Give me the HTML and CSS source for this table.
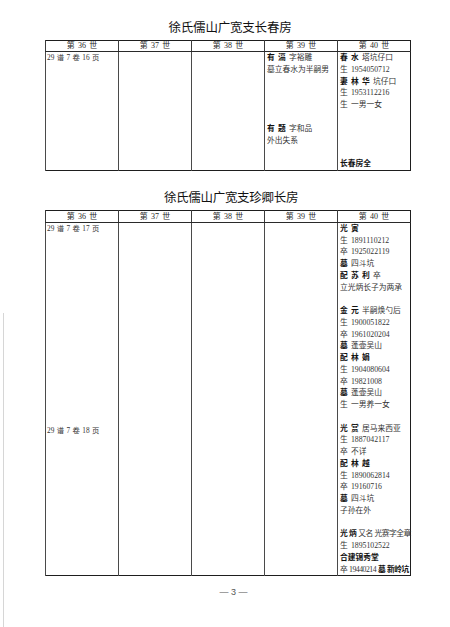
FILE: index.html
```html
<!DOCTYPE html>
<html lang="zh-CN">
<head>
<meta charset="utf-8">
<title>徐氏儒山广宽支</title>
<link rel="stylesheet" href="styles.css">
</head>
<body>
<div class="page">
  <h1 class="title">徐氏儒山广宽支长春房</h1>
  <table class="gen gen-1">
    <colgroup><col><col><col><col><col></colgroup>
    <thead>
      <tr><th>第 36 世</th><th>第 37 世</th><th>第 38 世</th><th>第 39 世</th><th>第 40 世</th></tr>
    </thead>
    <tbody>
      <tr>
        <td><div class="ln src">29 谱 7 卷 16 页</div></td>
        <td></td>
        <td></td>
        <td>
          <div class="ln"><b>有 滆</b> 字裕雕</div>
          <div class="ln">墓立春水为半嗣男</div>
          <div class="ln"></div>
          <div class="ln"></div>
          <div class="ln"></div>
          <div class="ln"></div>
          <div class="ln"><b>有 题</b> 字和品</div>
          <div class="ln">外出失系</div>
        </td>
        <td>
          <div class="ln"><b>春 水</b> 塔坑仔口</div>
          <div class="ln">生 1954050712</div>
          <div class="ln"><b>妻 林 华</b> 坑仔口</div>
          <div class="ln">生 1953112216</div>
          <div class="ln">生 一男一女</div>
          <div class="ln"></div>
          <div class="ln"></div>
          <div class="ln"></div>
          <div class="ln"></div>
          <div class="ln"><b>长春房全</b></div>
        </td>
      </tr>
    </tbody>
  </table>

  <h1 class="title title-2">徐氏儒山广宽支珍卿长房</h1>
  <table class="gen gen-2">
    <colgroup><col><col><col><col><col></colgroup>
    <thead>
      <tr><th>第 36 世</th><th>第 37 世</th><th>第 38 世</th><th>第 39 世</th><th>第 40 世</th></tr>
    </thead>
    <tbody>
      <tr>
        <td>
          <div class="ln src">29 谱 7 卷 17 页</div>
          <div class="spacer-16"></div>
          <div class="ln src src-low">29 谱 7 卷 18 页</div>
        </td>
        <td></td>
        <td></td>
        <td></td>
        <td>
          <div class="ln"><b>光 寅</b></div>
          <div class="ln">生 1891110212</div>
          <div class="ln">卒 1925022119</div>
          <div class="ln"><b>墓</b> 四斗坑</div>
          <div class="ln"><b>配 苏 利</b> 卒</div>
          <div class="ln">立光炳长子为两承</div>
          <div class="ln"></div>
          <div class="ln"><b>金 元</b> 半嗣焕勺后</div>
          <div class="ln">生 1900051822</div>
          <div class="ln">卒 1961020204</div>
          <div class="ln"><b>墓</b> 蓬壶吴山</div>
          <div class="ln"><b>配 林 娟</b></div>
          <div class="ln">生 1904080604</div>
          <div class="ln">卒 19821008</div>
          <div class="ln"><b>墓</b> 蓬壶吴山</div>
          <div class="ln">生 一男养一女</div>
          <div class="ln"></div>
          <div class="ln"><b>光 赏</b> 居马来西亚</div>
          <div class="ln">生 1887042117</div>
          <div class="ln">卒 不详</div>
          <div class="ln"><b>配 林 越</b></div>
          <div class="ln">生 1890062814</div>
          <div class="ln">卒 19160716</div>
          <div class="ln"><b>墓</b> 四斗坑</div>
          <div class="ln">子孙在外</div>
          <div class="ln"></div>
          <div class="ln tight"><b>光 炳</b> 又名 光赛字全章</div>
          <div class="ln">生 1895102522</div>
          <div class="ln"><b>合建锦秀堂</b></div>
          <div class="ln tight">卒 19440214 <b>墓 新岭坑</b></div>
        </td>
      </tr>
    </tbody>
  </table>

  <div class="folio">— 3 —</div>
</div>
<div class="scan-edge"></div>
</body>
</html>
```

FILE: styles.css
```css
html, body {
  margin: 0;
  padding: 0;
  background: #ffffff;
}

body {
  position: relative;
  width: 450px;
  height: 627px;
  overflow: hidden;
  font-family: "Liberation Serif", "Noto Sans CJK SC", serif;
  color: #333333;
}

.page {
  width: 366px;
  margin-left: 45px;
  padding-top: 20px;
}

.title {
  margin: 0;
  height: 16px;
  font-size: 12.5px;
  line-height: 16px;
  font-weight: normal;
  color: #111111;
  text-align: center;
  padding-left: 4px;
  letter-spacing: -0.2px;
  white-space: nowrap;
}

.title-2 {
  margin-top: 19px;
  padding-left: 6px;
  letter-spacing: -0.3px;
}

.gen {
  width: 366px;
  margin-top: 4px;
  border-collapse: collapse;
  table-layout: fixed;
  border: 1.5px solid #1e1e1e;
}

.gen th {
  height: 10px;
  padding: 0;
  font-size: 8px;
  line-height: 10px;
  font-weight: normal;
  color: #2a2a2a;
  text-align: center;
  word-spacing: 1.2px;
  border-left: 1px solid #3a3a3a;
  border-bottom: 1px solid #2a2a2a;
  white-space: nowrap;
}

.gen-2 th {
  height: 11px;
  line-height: 11px;
}

.gen td {
  vertical-align: top;
  padding: 0 0 0 2px;
  border-left: 1px solid #4a4a4a;
  font-size: 7.75px;
  word-spacing: 1.3px;
}

.ln {
  height: 11.8px;
  line-height: 11.8px;
  white-space: nowrap;
}

.gen-2 .ln {
  height: 11.75px;
  line-height: 11.75px;
}

.ln b {
  font-weight: bold;
  color: #111111;
}

.src {
  font-size: 7.3px;
  margin-left: -1px;
  word-spacing: 0.6px;
}

.gen-2 .spacer-16 {
  height: 188px;
}

.src-low {
  margin-top: 2px;
}

.tight {
  letter-spacing: -0.5px;
  word-spacing: 0.4px;
}

.folio {
  margin-top: 10px;
  height: 12px;
  line-height: 12px;
  font-size: 9px;
  text-align: center;
  padding-left: 11px;
  color: #555555;
  font-family: "Liberation Sans", "Noto Sans CJK SC", sans-serif;
}

.scan-edge {
  position: absolute;
  left: 3px;
  top: 313px;
  width: 1px;
  height: 314px;
  background: #d6d6d6;
}
```
